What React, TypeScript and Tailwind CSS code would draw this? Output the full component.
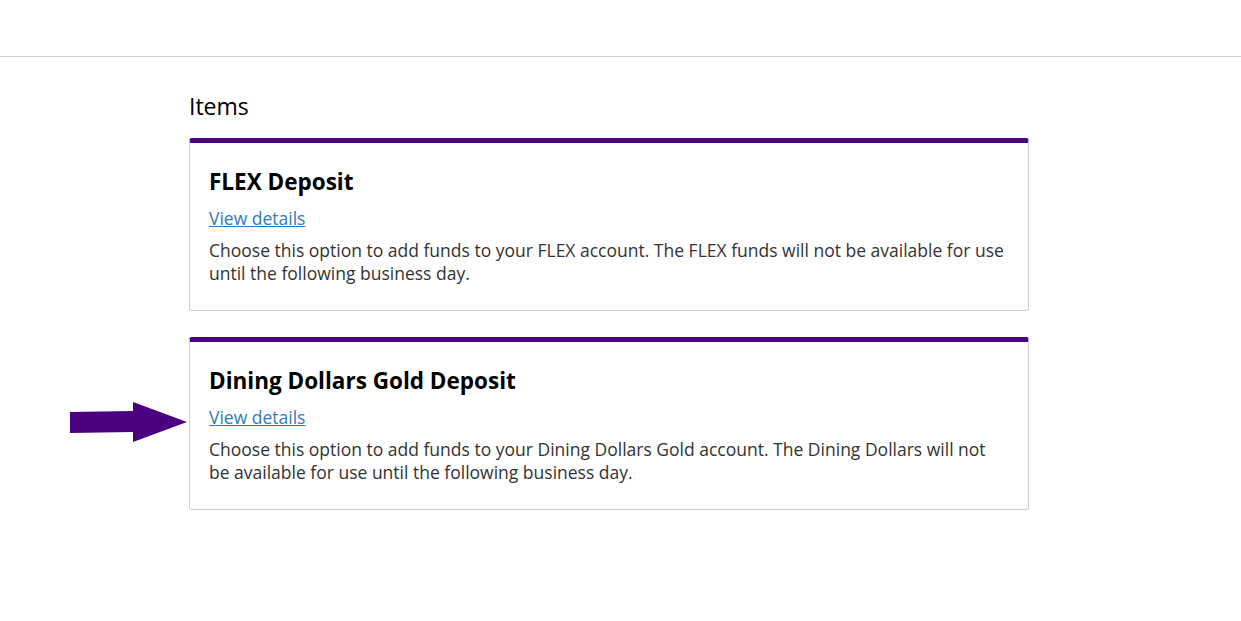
import React from "react";

function Card({ title, desc, arrow }: { title: string; desc: string; arrow?: boolean }) {
  return (
    <div className="relative rounded-[3px] border border-[#cccccc] border-t-[5px] border-t-[#4b0082] bg-white px-[19px] pt-[24px] pb-[25px]">
      {arrow && (
        <svg className="absolute left-[-120px] top-[60px]" width="118" height="42" viewBox="0 0 118 42">
          <polygon points="0,10 63,9 63,0 117,20 63,40 63,30 0,31" fill="#4b0082" />
        </svg>
      )}
      <h3 className="text-[22.5px] font-bold leading-[30px] text-black">{title}</h3>
      <a href="#" className="mt-[9px] block w-fit text-[17.5px] leading-[24px] text-[#337ab7] underline">
        View details
      </a>
      <p className="mt-[9px] text-[17.5px] leading-[23px] text-[#333333]">{desc}</p>
    </div>
  );
}

export default function App() {
  return (
    <div className="min-h-screen bg-white" style={{ fontFamily: '"Open Sans", sans-serif' }}>
      <div className="h-[57px] border-b border-[#d0d0d0]" />
      <div className="w-[840px] pt-[34px] ml-[189px]">
        <h2 className="text-[23px] leading-[30px] text-black">Items</h2>
        <div className="mt-[17px] flex flex-col gap-[26px]">
          <Card
            title="FLEX Deposit"
            desc="Choose this option to add funds to your FLEX account. The FLEX funds will not be available for use until the following business day."
          />
          <Card
            arrow
            title="Dining Dollars Gold Deposit"
            desc="Choose this option to add funds to your Dining Dollars Gold account. The Dining Dollars will not be available for use until the following business day."
          />
        </div>
      </div>
    </div>
  );
}
